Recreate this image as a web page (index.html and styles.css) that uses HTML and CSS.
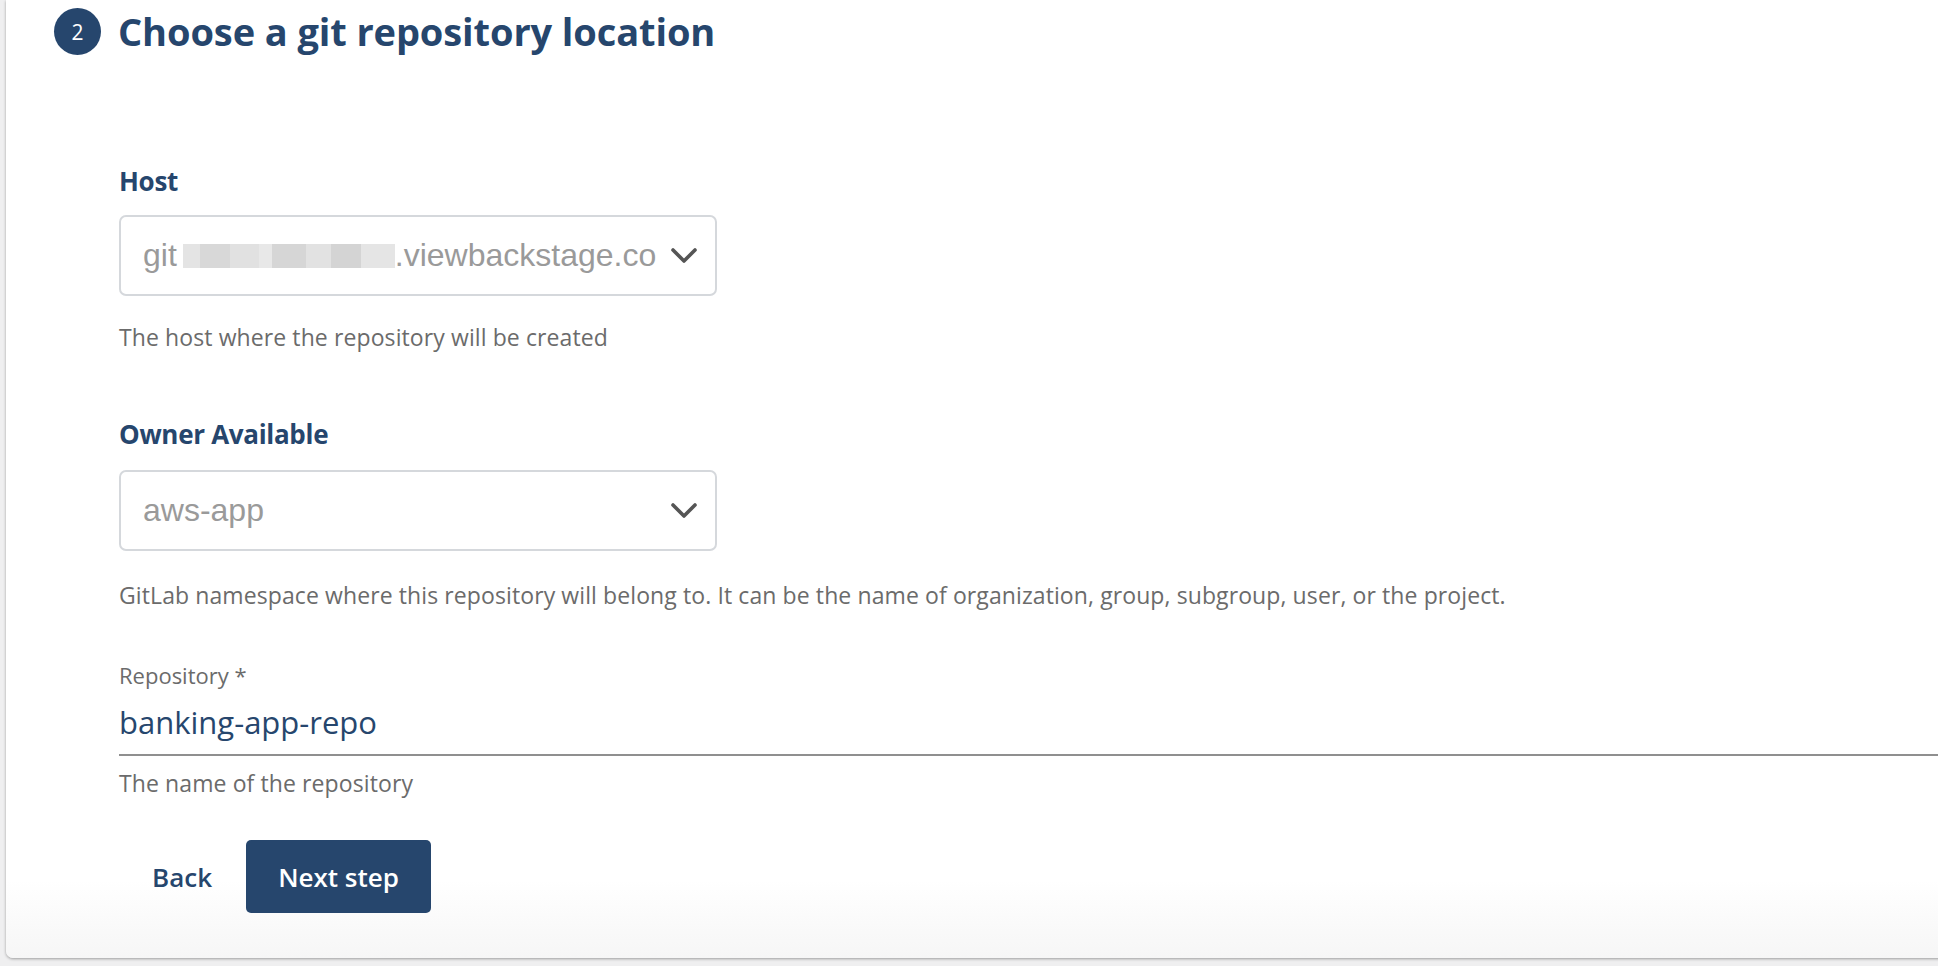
FILE: index.html
```html
<!DOCTYPE html>
<html lang="en">
<head>
<meta charset="utf-8">
<title>Choose a git repository location</title>
<link rel="stylesheet" href="styles.css">
</head>
<body>
<div class="page">
  <section class="card">
    <div class="step-head">
      <span class="step-num">2</span>
      <h1 class="step-title">Choose a git repository location</h1>
    </div>
    <form class="form">
      <div class="field field-host">
        <label class="field-label">Host</label>
        <div class="select">
          <span class="select-value">git<span class="redacted"></span>.viewbackstage.co</span>
          <svg class="chev" viewBox="0 0 26 16" width="26" height="16"><polyline points="2,2 13,13 24,2" fill="none" stroke="#555" stroke-width="3.6" stroke-linecap="round" stroke-linejoin="round"/></svg>
        </div>
        <p class="helper">The host where the repository will be created</p>
      </div>
      <div class="field field-owner">
        <label class="field-label">Owner Available</label>
        <div class="select">
          <span class="select-value">aws-app</span>
          <svg class="chev" viewBox="0 0 26 16" width="26" height="16"><polyline points="2,2 13,13 24,2" fill="none" stroke="#555" stroke-width="3.6" stroke-linecap="round" stroke-linejoin="round"/></svg>
        </div>
        <p class="helper">GitLab namespace where this repository will belong to. It can be the name of organization, group, subgroup, user, or the project.</p>
      </div>
      <div class="field field-repo">
        <label class="text-label">Repository *</label>
        <div class="text-input">banking-app-repo</div>
        <p class="helper helper-repo">The name of the repository</p>
      </div>
      <div class="actions">
        <button type="button" class="btn-back">Back</button>
        <button type="button" class="btn-next">Next step</button>
      </div>
    </form>
  </section>
</div>
</body>
</html>
```

FILE: styles.css
```css
html, body {
  margin: 0;
  padding: 0;
  background: #efeff0;
  overflow: hidden;
}

body {
  font-family: "Open Sans", "Noto Sans", sans-serif;
  color: #26466d;
}

.page {
  height: 966px;
  padding-left: 6px;
}

.card {
  box-sizing: border-box;
  height: 958px;
  width: calc(100% + 40px);
  background: linear-gradient(to bottom, #ffffff 0, #ffffff 880px, #f6f6f6 958px);
  border-bottom-left-radius: 7px;
  box-shadow: 0 1px 3px rgba(0, 0, 0, 0.35);
  padding: 8px 0 0 48px;
}

.step-head {
  display: flex;
  align-items: center;
  gap: 17px;
  height: 47px;
}

.step-num {
  width: 47px;
  height: 47px;
  border-radius: 50%;
  background: #26466d;
  color: #fff;
  display: flex;
  align-items: center;
  justify-content: center;
  font-size: 21px;
  font-weight: 400;
}

.step-title {
  margin: 0;
  font-size: 38px;
  font-weight: 700;
  line-height: 47px;
  color: #26466d;
  letter-spacing: -0.1px;
}

.form {
  padding-left: 65px;
  margin-top: 111px;
}

.field-label {
  display: block;
  font-size: 26px;
  font-weight: 700;
  line-height: 30px;
  color: #26466d;
  letter-spacing: -0.3px;
}

.select {
  box-sizing: border-box;
  margin-top: 19px;
  width: 598px;
  height: 81px;
  border: 2px solid #d5d8dc;
  border-radius: 7px;
  display: flex;
  align-items: center;
  padding: 0 18px 0 22px;
  gap: 6px;
}

.select-value {
  flex: 1;
  min-width: 0;
  white-space: nowrap;
  overflow: hidden;
  font-family: "Liberation Sans", Arial, sans-serif;
  font-size: 32px;
  color: #9a9a9a;
}

.redacted {
  display: inline-block;
  width: 212px;
  height: 24px;
  margin-left: 6px;
  vertical-align: -2px;
  background:
    linear-gradient(90deg, #e4e4e4 0 8%, #d8d8d8 8% 22%, #e1e1e1 22% 36%, #e8e8e8 36% 42%, #d6d6d6 42% 58%, #e2e2e2 58% 70%, #d4d4d4 70% 84%, #e5e5e5 84% 100%);
}

.chev {
  flex: none;
  display: block;
}

.helper {
  margin: 26px 0 0;
  font-size: 23px;
  line-height: 30px;
  color: #6b6b6b;
  letter-spacing: 0.1px;
}

.field-owner {
  margin-top: 67px;
}

.field-owner .select {
  margin-top: 21px;
}

.field-owner .helper {
  margin-top: 29px;
}

.field-repo {
  margin-top: 51px;
  width: calc(100% + 60px);
}

.text-label {
  display: block;
  font-size: 22px;
  line-height: 28px;
  color: #6b6b6b;
}

.text-input {
  font-size: 31px;
  line-height: 38px;
  margin-top: 14px;
  padding-bottom: 13px;
  border-bottom: 2px solid #8f8f8f;
  color: #26466d;
}

.helper-repo {
  margin-top: 12px;
}

.actions {
  display: flex;
  align-items: center;
  gap: 18px;
  margin-top: 42px;
}

.btn-back,
.btn-next {
  font-family: "Open Sans", "Noto Sans", sans-serif;
  font-size: 26px;
  font-weight: 600;
  border: none;
  cursor: pointer;
}

.btn-back {
  background: none;
  color: #26466d;
  padding: 0 16px 0 33px;
  height: 73px;
}

.btn-next {
  background: #26466d;
  color: #fff;
  height: 73px;
  width: 185px;
  border-radius: 5px;
}
```
